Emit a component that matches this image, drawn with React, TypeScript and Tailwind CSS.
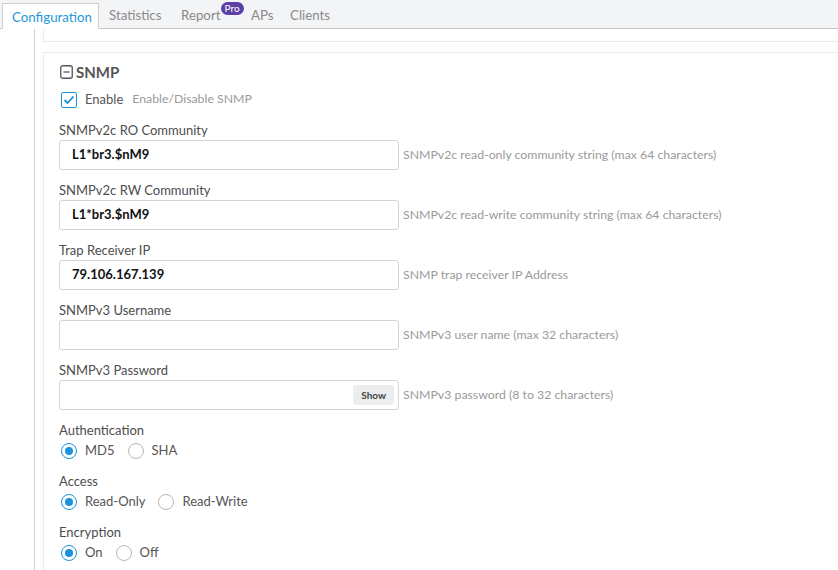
type FieldProps = {
  label: string;
  value?: string;
  help: string;
  showButton?: boolean;
  first?: boolean;
};

function Field({ label, value, help, showButton, first }: FieldProps) {
  return (
    <div className={first ? "mt-[14px]" : "mt-[12px]"}>
      <div className="h-[16px] leading-[16px] text-[13px] text-[#4d4d4d]">{label}</div>
      <div className="mt-[2px] flex items-center">
        <div className="w-[340px] h-[30px] border border-[#d4d4d4] rounded-[3px] flex items-center pl-[12px] pr-[4px] bg-white">
          <span className="flex-1 text-[13px] font-bold text-[#111]">{value}</span>
          {showButton && (
            <span className="h-[20px] px-[8px] rounded-[3px] bg-[#ebedef] text-[10px] font-bold text-[#444] leading-[20px]">
              Show
            </span>
          )}
        </div>
        <span className="ml-[4px] text-[12.3px] text-[#9a9a9a]">{help}</span>
      </div>
    </div>
  );
}

type RadioGroupProps = {
  label: string;
  options: string[];
  first?: boolean;
};

function RadioGroup({ label, options, first }: RadioGroupProps) {
  return (
    <div className={first ? "mt-[12px]" : "mt-[13px]"}>
      <div className="h-[16px] leading-[16px] text-[13px] text-[#4d4d4d]">{label}</div>
      <div className="mt-[4px] h-[18px] flex items-center pl-[2px]">
        {options.map((opt, i) => (
          <div key={opt} className="flex items-center mr-[13px]">
            {i === 0 ? (
              <span className="w-[16px] h-[16px] rounded-full border-[1.5px] border-[#1a93dc] flex items-center justify-center">
                <span className="w-[8px] h-[8px] rounded-full bg-[#1a93dc]" />
              </span>
            ) : (
              <span className="w-[16px] h-[16px] rounded-full border border-[#b8b8b8]" />
            )}
            <span className="ml-[8px] text-[13px] text-[#555]">{opt}</span>
          </div>
        ))}
      </div>
    </div>
  );
}

export default function App() {
  return (
    <div className="w-[838px] h-[570px] overflow-hidden bg-white font-['Lato','Liberation_Sans',sans-serif]">
      {/* tabs */}
      <div className="h-[29px] bg-[#f3f4f6] border-b border-[#c6c6c6] flex items-end pl-[2px]">
        <div className="w-[97px] h-[26px] -mb-px pl-[9px] pt-[2px] bg-white border border-b-white border-[#cfcfcf] text-[13.3px] text-[#1e98d7] leading-[22px]">
          Configuration
        </div>
        <div className="h-[28px] pt-[5px] flex text-[13.3px] leading-[20px] text-[#8a8a8a]">
          <span className="ml-[10px] w-[72px]">Statistics</span>
          <span className="w-[70px]">
            <span className="relative">
              Report
              <span className="absolute left-full -top-[5px] h-[13px] px-[4px] rounded-full bg-[#5b3fa8] text-white text-[10px] leading-[13px]">
                Pro
              </span>
            </span>
          </span>
          <span className="w-[39px]">APs</span>
          <span>Clients</span>
        </div>
      </div>

      <div className="flex h-[541px]">
        <div className="w-[35px] border-r border-[#cfcfcf]" />
        <div className="flex-1 pl-[8px]">
          <div className="h-[13px] border-l border-b border-[#ececec]" />
          <div className="mt-[10px] border-l border-t border-[#ececec] h-full pl-[15px]">
            <div className="mt-[10px] h-[18px] flex items-center pl-[1px]">
              <svg width="13" height="14" viewBox="0 0 13 14" className="text-[#555]">
                <rect x="0.75" y="0.75" width="11.5" height="12.5" rx="2" fill="none" stroke="currentColor" strokeWidth="1.3" />
                <line x1="3.5" y1="7" x2="9.5" y2="7" stroke="currentColor" strokeWidth="1.3" />
              </svg>
              <span className="ml-[3px] text-[15px] font-bold text-[#555]">SNMP</span>
            </div>

            <div className="mt-[10px] h-[17px] flex items-center pl-[2px]">
              <span className="w-[16px] h-[16px] border-[1.5px] border-[#1a93dc] rounded-[2px] flex items-center justify-center">
                <svg width="12" height="10" viewBox="0 0 12 10">
                  <polyline points="1.5,5 4.5,8 10.5,1.5" fill="none" stroke="#1a93dc" strokeWidth="1.8" />
                </svg>
              </span>
              <span className="ml-[8px] text-[13px] text-[#555]">Enable</span>
              <span className="ml-[9px] text-[12.3px] text-[#9a9a9a]">Enable/Disable SNMP</span>
            </div>

            <div className="mt-[2px]">
              <Field first label="SNMPv2c RO Community" value="L1*br3.$nM9" help="SNMPv2c read-only community string (max 64 characters)" />
              <Field label="SNMPv2c RW Community" value="L1*br3.$nM9" help="SNMPv2c read-write community string (max 64 characters)" />
              <Field label="Trap Receiver IP" value="79.106.167.139" help="SNMP trap receiver IP Address" />
              <Field label="SNMPv3 Username" help="SNMPv3 user name (max 32 characters)" />
              <Field label="SNMPv3 Password" help="SNMPv3 password (8 to 32 characters)" showButton />
            </div>

            <RadioGroup label="Authentication" options={["MD5", "SHA"]} first />
            <RadioGroup label="Access" options={["Read-Only", "Read-Write"]} />
            <RadioGroup label="Encryption" options={["On", "Off"]} />
          </div>
        </div>
      </div>
    </div>
  );
}
